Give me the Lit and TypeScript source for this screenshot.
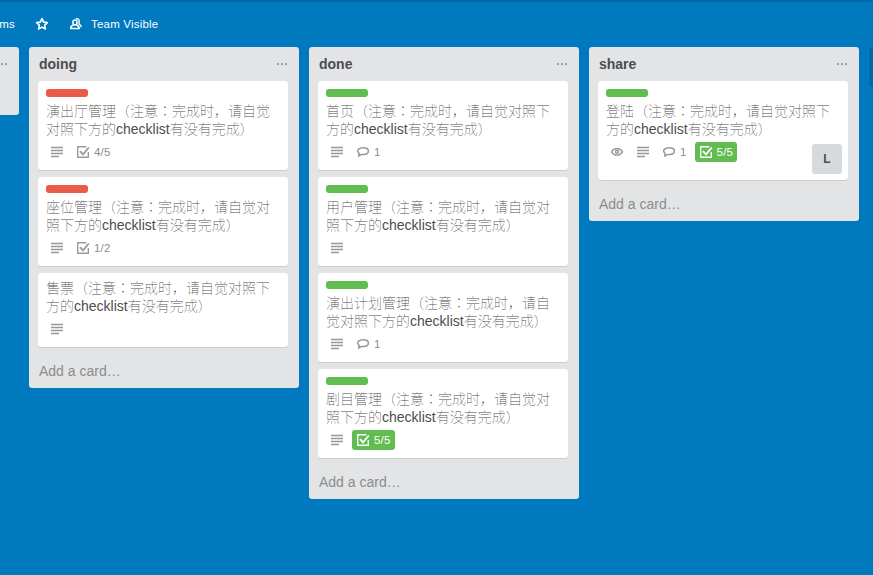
import { LitElement, html, svg, css, nothing } from "lit";
import { customElement, property } from "lit/decorators.js";

interface Card {
  title: string;
  label?: "red" | "green";
  watching?: boolean;
  comments?: number;
  checks?: string;
  complete?: boolean;
  member?: string;
}
interface List {
  name: string;
  cards: Card[];
}

const NOTE = "（注意：完成时，请自觉对照下方的checklist有没有完成）";

const LISTS: List[] = [
  {
    name: "doing",
    cards: [
      { title: "演出厅管理", label: "red", checks: "4/5" },
      { title: "座位管理", label: "red", checks: "1/2" },
      { title: "售票" },
    ],
  },
  {
    name: "done",
    cards: [
      { title: "首页", label: "green", comments: 1 },
      { title: "用户管理", label: "green" },
      { title: "演出计划管理", label: "green", comments: 1 },
      { title: "剧目管理", label: "green", checks: "5/5", complete: true },
    ],
  },
  {
    name: "share",
    cards: [
      { title: "登陆", label: "green", watching: true, comments: 1, checks: "5/5", complete: true, member: "L" },
    ],
  },
];

const icons = {
  star: svg`<path d="M8 2.600l1.650 3.500 3.750.500-2.750 2.600.700 3.800L8 11.150 4.650 13l.700-3.800L2.600 6.600l3.750-.500z" stroke-width="1.600" stroke-linejoin="round"/>`,
  team: svg`<ellipse cx="7" cy="6.500" rx="2.100" ry="2.500" stroke-width="1.500"/><path d="M5.500 9C4 9.500 2.600 10.200 2.600 12.500h8.600C11.200 10.200 10 9.500 8.500 9" stroke-width="1.500" stroke-linejoin="round"/><path d="M7.800 2.800c2.800-.7 4 1.600 3.200 3.900-.3.900-.1 1.200.5 1.600 1.200.6 1.700 1.400 1.700 3" stroke-width="1.400"/>`,
  lines: svg`<path d="M2 3.500h12M2 6.500h12M2 9.500h12M2 12.500h8" stroke-width="1.600"/>`,
  check: svg`<path d="M11.300 2.700H2.700v10.600h10.600V8" stroke-width="1.400"/><path d="M5 7.200l3 3.100 5.800-6.800" stroke-width="1.800"/>`,
  comment: svg`<path d="M8.300 3.800c3.100 0 5.100 1.400 5.100 3.300s-2 3.500-5.100 3.500c-.6 0-1.100 0-1.600-.2l-3 1.800.5-2.900C3.100 8.700 2.600 8 2.600 7.100c0-1.900 2.500-3.300 5.700-3.300z" stroke-width="1.500" stroke-linejoin="round"/>`,
  eye: svg`<path d="M2.500 7.800C4 5.400 5.900 4.500 8 4.500S12 5.400 13.500 7.800C12 10.200 10.100 11.100 8 11.100S4 10.200 2.500 7.800z" stroke-width="1.400"/><circle cx="8" cy="7.800" r="1.500" stroke-width="1.500"/>`,
};

const icon = (name: keyof typeof icons) =>
  html`<svg width="16" height="16" viewBox="0 0 16 16" fill="none" stroke="currentColor">${icons[name]}</svg>`;

@customElement("board-card")
class BoardCard extends LitElement {
  @property({ attribute: false }) card!: Card;

  static styles = css`
    :host {
      display: block;
      position: relative;
      box-sizing: border-box;
      padding: 6px 8px 8px;
      margin-bottom: 7px;
      background: #fff;
      border-radius: 3px;
      box-shadow: 0 1px 0 #ccc;
    }
    svg { display: block; }
    .label {
      width: 42px;
      height: 8px;
      margin: 2px 0 5px;
      border-radius: 3px;
    }
    .red { background: #eb5a46; }
    .green { background: #61bd4f; }
    .title {
      line-height: 18px;
      font-weight: 100;
      color: #4d4d4d;
      margin-bottom: 4px;
    }
    .badges {
      display: flex;
      gap: 6px;
      height: 20px;
      padding-left: 1px;
      color: #999;
    }
    .badge {
      display: flex;
      align-items: center;
      box-sizing: border-box;
      height: 20px;
      padding: 0 2px;
      font-size: 11.5px;
      letter-spacing: 0.2px;
      color: #8c8c8c;
      border-radius: 3px;
    }
    .badge svg { color: #999; }
    .badge span { padding-left: 3px; }
    .comments { padding-right: 3px; }
    .complete {
      background: #61bd4f;
      color: #fff;
      margin-left: -1px;
      padding: 0 4px 0 3px;
    }
    .complete svg { color: #fff; }
    .staffed { margin-bottom: 10px; }
    .member {
      position: absolute;
      right: 6px;
      bottom: 6px;
      width: 30px;
      height: 30px;
      border-radius: 3px;
      background: #d6dadc;
      font: bold 12px/30px "Liberation Sans", sans-serif;
      text-align: center;
      color: #4d4d4d;
    }
  `;

  render() {
    const c = this.card;
    return html`
      ${c.label ? html`<div class="label ${c.label}"></div>` : nothing}
      <div class="title">${c.title}${NOTE}</div>
      <div class="badges ${c.member ? "staffed" : ""}">
        ${c.watching ? html`<div class="badge">${icon("eye")}</div>` : nothing}
        <div class="badge">${icon("lines")}</div>
        ${c.comments ? html`<div class="badge comments">${icon("comment")}<span>${c.comments}</span></div>` : nothing}
        ${c.checks
          ? html`<div class="badge ${c.complete ? "complete" : ""}">${icon("check")}<span>${c.checks}</span></div>`
          : nothing}
      </div>
      ${c.member ? html`<div class="member">${c.member}</div>` : nothing}
    `;
  }
}

@customElement("app-root")
class AppRoot extends LitElement {
  static styles = css`
    :host {
      display: flex;
      flex-direction: column;
      box-sizing: border-box;
      width: 100%;
      height: 100vh;
      overflow: hidden;
      background: #0079bf;
      box-shadow: inset 0 2px 1px #0067a3;
      font: 14px/18px "Liberation Sans", "Noto Sans CJK JP", "Noto Sans CJK SC", sans-serif;
      color: #4d4d4d;
    }
    svg { display: block; }
    header {
      display: flex;
      align-items: center;
      flex: none;
      height: 47px;
      box-sizing: border-box;
      padding-top: 1px;
      font-size: 11.5px;
      letter-spacing: 0.2px;
      color: #fff;
    }
    .team {
      width: 100px;
      margin-left: -85px;
      text-align: right;
    }
    .star { margin-left: 19px; }
    .people { margin: 0 7px 0 18px; }
    .lists {
      display: flex;
      align-items: flex-start;
      gap: 10px;
      margin-left: -251px;
    }
    .list {
      flex: none;
      box-sizing: border-box;
      width: 270px;
      padding: 0 11px 0 9px;
      background: #e2e4e6;
      border-radius: 3px;
    }
    .partial { height: 68px; }
    .head {
      display: flex;
      align-items: center;
      justify-content: space-between;
      height: 34px;
      padding-left: 1px;
      font-weight: bold;
    }
    .dots {
      display: flex;
      gap: 2px;
      margin-right: 1px;
      padding-bottom: 1px;
    }
    .dots i {
      width: 2px;
      height: 2px;
      background: #999;
      border-radius: 0.5px;
    }
    .add {
      padding: 9px 1px;
      line-height: 16px;
      color: #8c8c8c;
    }
    .next {
      flex: none;
      width: 270px;
      height: 40px;
      background: #006aa8;
      border-radius: 3px;
    }
  `;

  private head(name: string) {
    return html`<div class="head"><span>${name}</span><span class="dots"><i></i><i></i><i></i></span></div>`;
  }

  render() {
    return html`
      <header>
        <span class="team">Teams</span>
        <span class="star">${icon("star")}</span>
        <span class="people">${icon("team")}</span>
        <span>Team Visible</span>
      </header>
      <div class="lists">
        <div class="list partial">${this.head("")}</div>
        ${LISTS.map(
          (l) => html`<div class="list">
            ${this.head(l.name)}
            ${l.cards.map((c) => html`<board-card .card=${c}></board-card>`)}
            <div class="add">Add a card…</div>
          </div>`
        )}
        <div class="next"></div>
      </div>
    `;
  }
}
